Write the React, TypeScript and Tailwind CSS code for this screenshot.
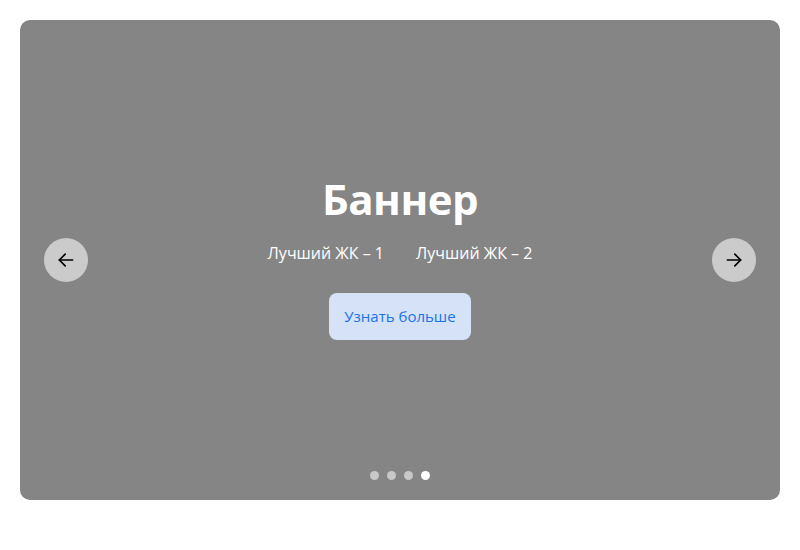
import React from "react";

function Arrow({ dir }: { dir: "left" | "right" }) {
  return (
    <svg width="20" height="20" viewBox="0 0 24 24" fill="none" stroke="#000" strokeWidth="2" strokeLinecap="round" strokeLinejoin="round">
      {dir === "left" ? (
        <>
          <path d="M20 12H4" />
          <path d="M11 5l-7 7 7 7" />
        </>
      ) : (
        <>
          <path d="M4 12h16" />
          <path d="M13 5l7 7-7 7" />
        </>
      )}
    </svg>
  );
}

export default function App() {
  return (
    <div className="w-[800px] h-[550px] bg-white p-5" style={{ fontFamily: '"Open Sans", "Noto Sans", sans-serif' }}>
      <div className="relative w-[760px] h-[480px] bg-[#858585] rounded-[10px] flex flex-col items-center justify-center pb-[5px]">
        <h1 className="text-[42px] leading-[48px] font-bold text-white tracking-[-0.5px]">Баннер</h1>
        <div className="mt-[20px] flex gap-[32px] text-[16px] leading-[20px] text-white">
          <span>Лучший ЖК – 1</span>
          <span>Лучший ЖК – 2</span>
        </div>
        <button className="mt-[30px] w-[142px] h-[47px] rounded-[8px] bg-[#d5e2f8] text-[#1a73e8] text-[15px]">
          Узнать больше
        </button>
        <button className="absolute left-[24px] top-[218px] w-[44px] h-[44px] rounded-full bg-[#cbcbcb] flex items-center justify-center">
          <Arrow dir="left" />
        </button>
        <button className="absolute right-[24px] top-[218px] w-[44px] h-[44px] rounded-full bg-[#cbcbcb] flex items-center justify-center">
          <Arrow dir="right" />
        </button>
        <div className="absolute bottom-[20px] left-0 right-0 flex justify-center gap-[8px]">
          <span className="w-[9px] h-[9px] rounded-full bg-[#c8c8c8]" />
          <span className="w-[9px] h-[9px] rounded-full bg-[#c8c8c8]" />
          <span className="w-[9px] h-[9px] rounded-full bg-[#c8c8c8]" />
          <span className="w-[9px] h-[9px] rounded-full bg-white" />
        </div>
      </div>
    </div>
  );
}
